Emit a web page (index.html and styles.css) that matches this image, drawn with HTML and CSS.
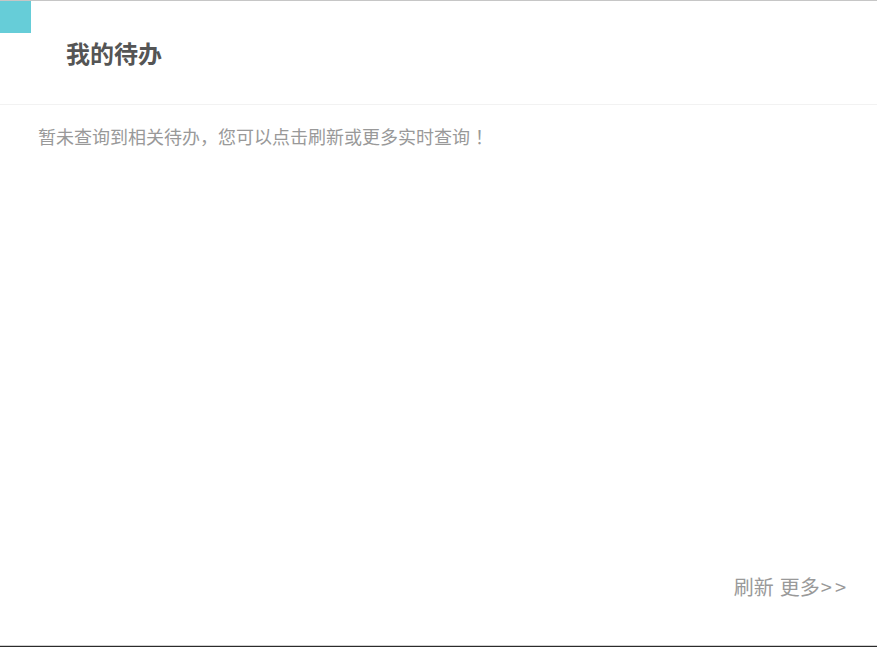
FILE: index.html
```html
<!DOCTYPE html>
<html lang="zh-CN">
<head>
    <meta charset="UTF-8" />
    <meta name="viewport" content="width=device-width, initial-scale=1.0"/>
    <title>我的待办</title>
    <link rel="stylesheet" href="styles.css">
</head>
<body>
    <div class="todo-panel">
        <div class="panel-header">
            <span class="corner-mark"></span>
            <h2 class="panel-title">我的待办</h2>
        </div>
        <div class="panel-body">
            <p class="empty-tip">暂未查询到相关待办，您可以点击刷新或更多实时查询<span class="wide-punct">！</span></p>
        </div>
        <div class="panel-footer">
            <a href="#" class="footer-link">刷新</a>
            <a href="#" class="footer-link">更多<span class="arrows">&gt;&gt;</span></a>
        </div>
    </div>
</body>
</html>
```

FILE: styles.css
```css
html, body {
    margin: 0;
    height: 100%;
}

body {
    font-family: "Microsoft YaHei", "Noto Sans CJK SC", "Noto Sans", sans-serif;
    background: #fff;
    color: #333;
}

.todo-panel {
    box-sizing: border-box;
    height: 100%;
    display: flex;
    flex-direction: column;
    border-top: 1px solid #c6c6c6;
    border-bottom: 1px solid #2b2b2b;
    box-shadow: inset 0 -1px 0 #cfcfcf;
}

.panel-header {
    position: relative;
    height: 103px;
    display: flex;
    align-items: center;
    padding-left: 66px;
    border-bottom: 1px solid #f2f2f2;
}

.corner-mark {
    position: absolute;
    top: 0;
    left: 0;
    width: 31px;
    height: 32px;
    background: #66cdd8;
}

.panel-title {
    margin: 0;
    font-size: 24px;
    font-weight: bold;
    color: #555;
    line-height: 1;
}

.panel-body {
    flex: 1;
    padding: 19px 38px 0;
}

.empty-tip {
    margin: 0;
    font-size: 18px;
    line-height: 24px;
    color: #999;
}

.wide-punct {
    padding-left: 5px;
}

.panel-footer {
    display: flex;
    justify-content: flex-end;
    gap: 6px;
    padding: 0 28px 46px 0;
}

.footer-link {
    font-size: 20px;
    line-height: 26px;
    color: #999;
    text-decoration: none;
    white-space: nowrap;
}

.arrows {
    padding-left: 1px;
    letter-spacing: 3px;
}
```
